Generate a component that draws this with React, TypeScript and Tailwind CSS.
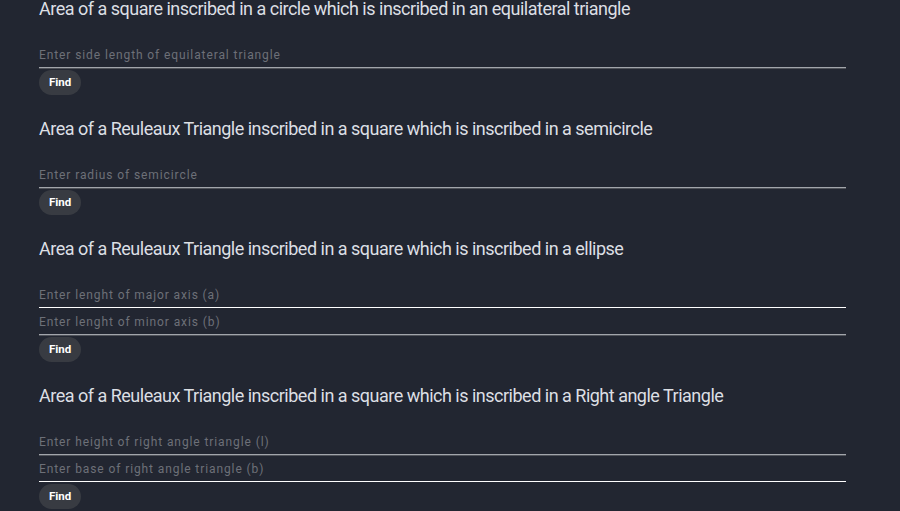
const sections = [
  {
    title: "Area of a square inscribed in a circle which is inscribed in an equilateral triangle",
    inputs: [{ placeholder: "Enter side length of equilateral triangle", active: false }],
  },
  {
    title: "Area of a Reuleaux Triangle inscribed in a square which is inscribed in a semicircle",
    inputs: [{ placeholder: "Enter radius of semicircle", active: false }],
  },
  {
    title: "Area of a Reuleaux Triangle inscribed in a square which is inscribed in a ellipse",
    inputs: [
      { placeholder: "Enter lenght of major axis (a)", active: true },
      { placeholder: "Enter lenght of minor axis (b)", active: false },
    ],
  },
  {
    title: "Area of a Reuleaux Triangle inscribed in a square which is inscribed in a Right angle Triangle",
    inputs: [
      { placeholder: "Enter height of right angle triangle (l)", active: false },
      { placeholder: "Enter base of right angle triangle (b)", active: true },
    ],
  },
];

const App = () => {
  return (
    <div className="min-h-screen overflow-hidden bg-[#222631] font-['Roboto',_'Liberation_Sans',_sans-serif]">
      <div className="-mt-[3px] pl-[39px] w-[846px]">
        {sections.map((s, i) => (
          <section key={i} className="mb-[22px]">
            <h2 className="text-[18px] leading-[24px] tracking-[-0.5px] text-[#dcdfe4] mb-[20px] whitespace-nowrap">
              {s.title}
            </h2>
            {s.inputs.map((inp, j) => (
              <input
                key={j}
                placeholder={inp.placeholder}
                className={
                  "block w-full h-[27px] bg-transparent outline-none px-0 pt-[2px] text-[12px] tracking-[0.9px] text-[#dcdfe4] placeholder:text-[#6d7078] border-b " +
                  (inp.active
                    ? "border-white"
                    : "border-[#a2a5ab] shadow-[0_1px_0_#50535a]")
                }
              />
            ))}
            <button className="mt-[2px] h-[25px] px-[10px] rounded-full bg-[#383b42] text-[11.5px] font-bold text-white">
              Find
            </button>
          </section>
        ))}
      </div>
    </div>
  );
};

export default App;
